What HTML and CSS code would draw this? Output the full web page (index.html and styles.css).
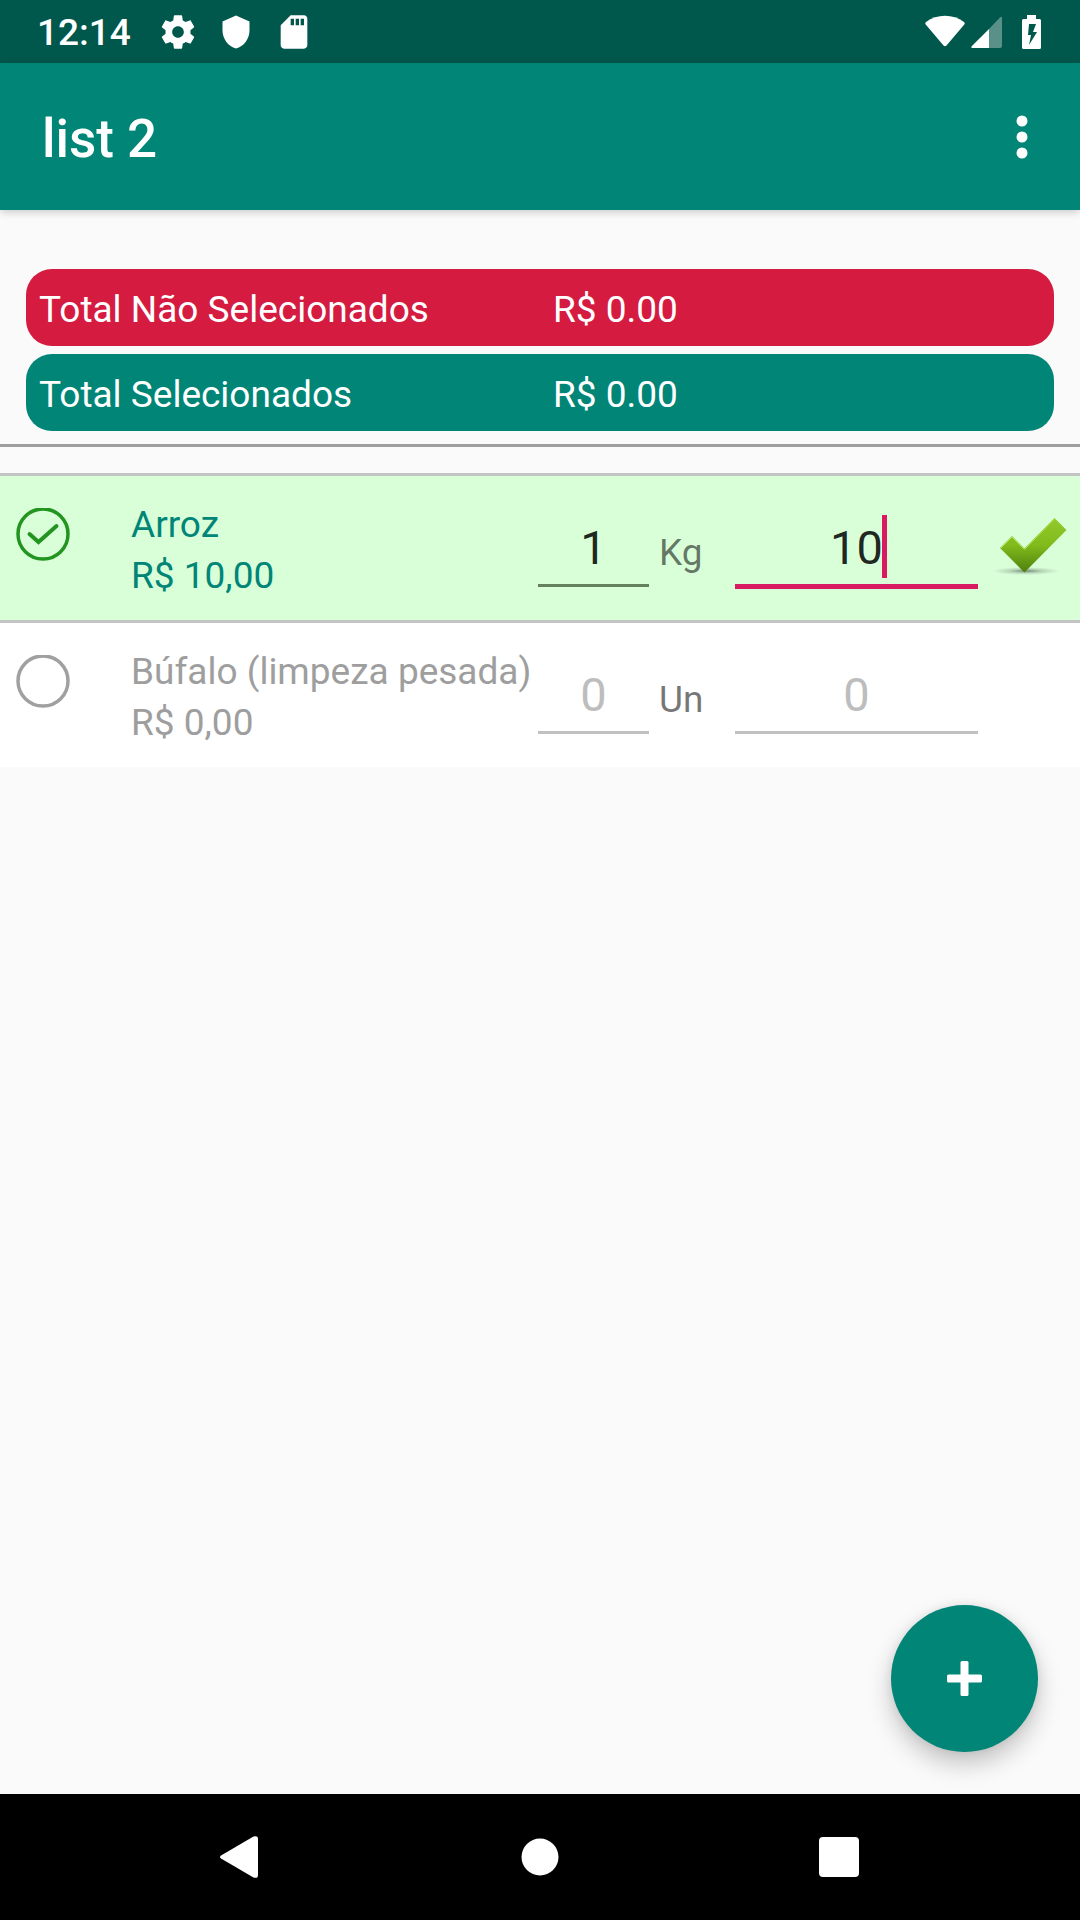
FILE: index.html
```html
<!DOCTYPE html>
<html lang="pt-BR">
<head>
<meta charset="UTF-8">
<meta name="viewport" content="width=device-width, initial-scale=1.0">
<title>list 2</title>
<link rel="stylesheet" href="styles.css">
</head>
<body>

<div class="status-bar">
    <div class="status-left">
        <span class="clock">12:14</span>
        <svg width="40" height="40" viewBox="0 0 24 24" fill="#fff"><path d="M19.43 12.98c.04-.32.07-.64.07-.98s-.03-.66-.07-.98l2.11-1.65c.19-.15.24-.42.12-.64l-2-3.46c-.12-.22-.39-.3-.61-.22l-2.49 1c-.52-.4-1.08-.73-1.69-.98l-.38-2.65C14.46 2.18 14.25 2 14 2h-4c-.25 0-.46.18-.49.42l-.38 2.65c-.61.25-1.17.59-1.69.98l-2.49-1c-.23-.09-.49 0-.61.22l-2 3.46c-.13.22-.07.49.12.64l2.11 1.65c-.04.32-.07.65-.07.98s.03.66.07.98l-2.11 1.65c-.19.15-.24.42-.12.64l2 3.46c.12.22.39.3.61.22l2.49-1c.52.4 1.08.73 1.69.98l.38 2.65c.03.24.24.42.49.42h4c.25 0 .46-.18.49-.42l.38-2.65c.61-.25 1.17-.59 1.69-.98l2.49 1c.23.09.49 0 .61-.22l2-3.46c.12-.22.07-.49-.12-.64l-2.11-1.65zM12 15.5c-1.93 0-3.5-1.57-3.5-3.5s1.57-3.5 3.5-3.5 3.5 1.57 3.5 3.5-1.57 3.5-3.5 3.5z"/></svg>
        <svg width="36" height="36" viewBox="0 0 24 24" fill="#fff"><path d="M12 1L3 5v6c0 5.55 3.84 10.74 9 12 5.16-1.26 9-6.45 9-12V5l-9-4z"/></svg>
        <svg width="40" height="40" viewBox="0 0 24 24" fill="#fff"><path d="M18 2h-8L4.02 8 4 20c0 1.100.9 2 2 2h12c1.100 0 2-.9 2-2V4c0-1.100-.9-2-2-2zm-6 6h-2V4h2v4zm3 0h-2V4h2v4zm3 0h-2V4h2v4z"/></svg>
    </div>
    <div class="status-right">
        <svg width="40" height="34" viewBox="0 0 40 34" fill="#fff"><path d="M1 7C12-1.500 28-1.500 39 7c.9.700 1 1.700.3 2.600L21.500 30.500c-.9 1-2.100 1-3 0L.7 9.600C0 8.700.1 7.700 1 7z"/></svg>
        <svg width="31" height="34" viewBox="0 0 31 34" fill="#fff"><path d="M31 3v28q0 2-2 2H18V14L29 2.500q2-1.500 2 .5z" opacity=".35"/><path d="M18 14v19H1.500q-2 0-.8-1.700z"/></svg>
        <svg class="battery" width="19" height="34" viewBox="0 0 19 34" fill="#fff"><path fill-rule="evenodd" d="M5 0h9v4h3.500q1.500 0 1.500 1.500v27q0 1.500-1.500 1.500h-16Q0 34 0 32.500v-27Q0 4 1.500 4H5zM7 9l-1 11h3l-2 10 8-13h-4l3-8z"/></svg>
    </div>
</div>

<header class="app-bar">
    <h1 class="title">list 2</h1>
    <button class="menu" type="button" aria-label="Menu">
        <svg width="44" height="44" viewBox="0 0 44 44" fill="#fff"><circle cx="22" cy="6" r="5.500"/><circle cx="22" cy="22" r="5.500"/><circle cx="22" cy="38" r="5.500"/></svg>
    </button>
</header>

<main class="content">
    <div class="totals">
        <div class="total total-pending">
            <span>Total Não Selecionados</span>
            <span>R$ 0.00</span>
        </div>
        <div class="total total-selected">
            <span>Total Selecionados</span>
            <span>R$ 0.00</span>
        </div>
    </div>

    <ul class="list">
        <li class="item item-selected">
            <label class="check">
                <input type="checkbox" aria-label="Arroz" checked>
                <svg width="54" height="53" viewBox="0 0 54 53" fill="none" stroke="#239420"><circle cx="27" cy="26" r="25" stroke-width="3.500"/><path d="M13.500 26l9 8 18-16" stroke-width="4" stroke-linecap="round"/></svg>
            </label>
            <div class="name">
                <div>Arroz</div>
                <div>R$ 10,00</div>
            </div>
            <input class="field" type="text" aria-label="Quantidade de Arroz" placeholder="0" value="1">
            <span class="unit">Kg</span>
            <div class="price">
                <input class="field field-active" type="text" aria-label="Preço de Arroz" placeholder="0" value="10">
                <span class="caret"></span>
            </div>
            <button class="confirm" type="button" aria-label="Confirmar">
                <svg width="80" height="64" viewBox="0 0 80 64">
                    <defs>
                        <linearGradient id="leaf" x1="0" y1="0" x2="0" y2="1">
                            <stop offset="0" stop-color="#93c92c"/>
                            <stop offset=".5" stop-color="#80bb1b"/>
                            <stop offset="1" stop-color="#4f7f0e"/>
                        </linearGradient>
                        <radialGradient id="shade">
                            <stop offset="0" stop-color="#000" stop-opacity=".45"/>
                            <stop offset=".5" stop-color="#000" stop-opacity=".15"/>
                            <stop offset="1" stop-color="#000" stop-opacity="0"/>
                        </radialGradient>
                    </defs>
                    <ellipse cx="36" cy="57" rx="34" ry="4" fill="url(#shade)"/>
                    <path d="M10 34L22 22 34.500 34.500 64.500 4 76.500 16 34.500 58.500z" fill="url(#leaf)"/>
                    <path d="M11 34L22 23 34.500 35.500 64.500 5" fill="none" stroke="#b5e04f"/>
                </svg>
            </button>
        </li>
        <li class="item">
            <label class="check">
                <input type="checkbox" aria-label="Búfalo (limpeza pesada)">
                <svg width="54" height="53" viewBox="0 0 54 53" fill="none" stroke="#a0a0a0"><circle cx="27" cy="26" r="25" stroke-width="3.500"/></svg>
            </label>
            <div class="name">
                <div>Búfalo (limpeza pesada)</div>
                <div>R$ 0,00</div>
            </div>
            <input class="field" type="text" aria-label="Quantidade de Búfalo" placeholder="0">
            <span class="unit">Un</span>
            <div class="price">
                <input class="field" type="text" aria-label="Preço de Búfalo" placeholder="0">
            </div>
        </li>
    </ul>

    <button class="fab" type="button" aria-label="Adicionar">
        <svg width="35" height="35" viewBox="0 0 35 35" fill="#fff"><rect x="13.500" y="0" width="8" height="35" rx="1.500"/><rect x="0" y="13.500" width="35" height="8" rx="1.500"/></svg>
    </button>
</main>

<nav class="nav-bar">
    <button type="button" aria-label="Voltar">
        <svg width="42" height="42" viewBox="0 0 42 42" fill="#fff"><path d="M1 19.500L33.500.6Q38-1 38 3v36q0 4-4.500 2.400L1 22.500q-2-1.500 0-3z"/></svg>
    </button>
    <button type="button" aria-label="Início">
        <svg width="38" height="38" viewBox="0 0 38 38" fill="#fff"><circle cx="19" cy="19" r="18.500"/></svg>
    </button>
    <button type="button" aria-label="Recentes">
        <svg width="40" height="40" viewBox="0 0 40 40" fill="#fff"><rect width="40" height="40" rx="4"/></svg>
    </button>
</nav>

</body>
</html>
```

FILE: styles.css
```css
* {
    box-sizing: border-box;
}

body {
    margin: 0;
    min-height: 100vh;
    display: flex;
    flex-direction: column;
    font-family: Roboto, sans-serif;
    font-size: 37px;
    line-height: 51px;
    background-color: #fafafa;
}

svg {
    display: block;
}

button {
    border: 0;
    padding: 0;
    background: none;
    cursor: pointer;
}

/* Status bar */
.status-bar {
    display: flex;
    justify-content: space-between;
    align-items: center;
    height: 63px;
    padding: 0 39px 0 37px;
    background-color: #00574b;
    color: #fff;
}

.status-left,
.status-right {
    display: flex;
    align-items: center;
}

.status-left {
    gap: 20px;
}

.status-right {
    gap: 6px;
}

.clock {
    font-weight: 500;
    padding-top: 2px;
    margin-right: 7px;
}

.battery {
    margin-left: 14px;
}

/* App bar */
.app-bar {
    display: flex;
    justify-content: space-between;
    align-items: center;
    height: 147px;
    padding: 0 36px 0 42px;
    background-color: #008577;
    color: #fff;
    box-shadow: 0 2px 8px rgba(0, 0, 0, 0.2);
}

.title {
    margin: 0;
    padding-top: 4px;
    font-size: 53px;
    line-height: 62px;
    font-weight: 500;
}

/* Totals */
.content {
    flex: 1;
    position: relative;
}

.totals {
    display: flex;
    flex-direction: column;
    gap: 8px;
    padding: 59px 26px 13px;
    border-bottom: 3px solid #9e9e9e;
}

.total {
    display: grid;
    grid-template-columns: 1fr 1fr;
    padding: 15px 0 11px;
    border-radius: 26px;
    color: #fff;
}

.total span {
    padding-left: 13px;
}

.total-pending {
    background-color: #d51b40;
}

.total-selected {
    background-color: #008577;
}

/* List */
.list {
    list-style: none;
    margin: 26px 0 0;
    padding: 0;
}

.item {
    display: grid;
    grid-template-columns: 131px minmax(0, 1fr) 111px 86px 243px 102px;
    align-items: start;
    padding: 23px 0 19px;
    background-color: #fff;
    color: #9e9e9e;
}

.item-selected {
    border-top: 3px solid #c4c4c4;
    border-bottom: 3px solid #c4c4c4;
    background-color: #d9ffd9;
    color: #008577;
}

.check {
    display: grid;
    justify-content: start;
    margin: 9px 0 0 16px;
    cursor: pointer;
}

.check input,
.check svg {
    grid-area: 1 / 1;
}

.check input {
    width: 54px;
    height: 53px;
    margin: 0;
    opacity: 0;
}

.name {
    white-space: nowrap;
}

.field {
    display: block;
    width: 100%;
    margin-top: 9px;
    padding: 9px 0 7px;
    border: 0;
    border-bottom: 3px solid #c1c1c1;
    border-radius: 0;
    outline: none;
    background-color: transparent;
    color: rgba(0, 0, 0, 0.87);
    font-family: inherit;
    font-size: 47px;
    line-height: 60px;
    height: 79px;
    text-align: center;
}

.field::placeholder {
    color: #bdbdbd;
    opacity: 1;
}

.item-selected .field {
    border-bottom-color: #64805f;
}

.item-selected .field-active {
    height: 81px;
    border-bottom: 5px solid #d81b60;
}

.unit {
    margin-top: 28px;
    padding-left: 10px;
    color: rgba(0, 0, 0, 0.54);
}

.price {
    position: relative;
}

.caret {
    position: absolute;
    top: 16px;
    left: calc(50% + 25px);
    width: 5px;
    height: 63px;
    background-color: #d81b60;
}

.confirm {
    margin: 15px 0 0 12px;
    width: 80px;
    height: 64px;
}

/* Add button */
.fab {
    position: absolute;
    right: 42px;
    bottom: 42px;
    display: flex;
    justify-content: center;
    align-items: center;
    width: 147px;
    height: 147px;
    border-radius: 50%;
    background-color: #008577;
    box-shadow: 0 12px 24px rgba(0, 0, 0, 0.22), 0 0 10px rgba(0, 0, 0, 0.08);
}

/* Navigation bar */
.nav-bar {
    display: flex;
    justify-content: center;
    height: 126px;
    background-color: #000;
}

.nav-bar button {
    display: flex;
    justify-content: center;
    align-items: center;
    width: 299px;
}
```
